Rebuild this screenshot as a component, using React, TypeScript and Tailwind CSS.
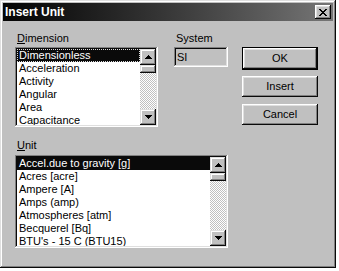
import React from "react";

const FONT = "font-['Liberation_Sans',Arial,sans-serif]";
const RAISED =
  "shadow-[inset_-1px_-1px_#0a0a0a,inset_1px_1px_#fff,inset_-2px_-2px_#808080,inset_2px_2px_#dfdfdf]";
const RAISED_SB =
  "shadow-[inset_-1px_-1px_#0a0a0a,inset_1px_1px_#dfdfdf,inset_-2px_-2px_#808080,inset_2px_2px_#fff]";
const SUNKEN =
  "shadow-[inset_-1px_-1px_#fff,inset_1px_1px_#808080,inset_-2px_-2px_#dfdfdf,inset_2px_2px_#0a0a0a]";

const DIMENSIONS = ["Dimensionless", "Acceleration", "Activity", "Angular", "Area", "Capacitance"];
const UNITS = [
  "Accel.due to gravity [g]",
  "Acres [acre]",
  "Ampere [A]",
  "Amps (amp)",
  "Atmospheres [atm]",
  "Becquerel [Bq]",
  "BTU's - 15 C (BTU15)",
];

function Arrow({ down }: { down?: boolean }) {
  return (
    <svg width="7" height="4" viewBox="0 0 7 4" shapeRendering="crispEdges">
      {down ? <polygon points="0,0 7,0 3.5,4" fill="#000" /> : <polygon points="3.5,0 7,4 0,4" fill="#000" />}
    </svg>
  );
}

function ScrollBar() {
  return (
    <div className="flex flex-col w-[16px] h-full shrink-0">
      <div className={`h-[16px] bg-[#c0c0c0] flex items-center justify-center ${RAISED_SB}`}>
        <Arrow />
      </div>
      <div className={`h-[8px] bg-[#c0c0c0] ${RAISED_SB}`} />
      <div className="flex-1 bg-[repeating-conic-gradient(#c0c0c0_0_25%,#fff_0_50%)] bg-[length:2px_2px]" />
      <div className={`h-[16px] bg-[#c0c0c0] flex items-center justify-center ${RAISED_SB}`}>
        <Arrow down />
      </div>
    </div>
  );
}

function ListBox({ items, className, focus }: { items: string[]; className: string; focus?: boolean }) {
  return (
    <div className={`bg-white p-[2px] flex ${SUNKEN} ${className}`}>
      <div className="flex-1 overflow-hidden">
        {items.map((it, i) => (
          <div
            key={it}
            className={`h-[13px] leading-[13px] pl-[2px] whitespace-nowrap ${
              i === 0 ? "bg-[#0a0a0a] text-white" : "text-black"
            } ${i === 0 && focus ? "outline-1 outline-dotted outline-[#dcdcdc] -outline-offset-1" : ""}`}
          >
            {it}
          </div>
        ))}
      </div>
      <ScrollBar />
    </div>
  );
}

function Button({ label, def, className }: { label: string; def?: boolean; className: string }) {
  if (def) {
    return (
      <div className={`border border-black ${className}`}>
        <div className={`h-full flex items-center justify-center bg-[#c0c0c0] ${RAISED}`}>{label}</div>
      </div>
    );
  }
  return (
    <div className={`flex items-center justify-center bg-[#c0c0c0] ${RAISED} ${className}`}>{label}</div>
  );
}

export default function App() {
  return (
    <div className={`w-[339px] h-[271px] bg-white ${FONT} text-[11px] text-black`}>
      <div
        className={`w-[336px] h-[268px] bg-[#c0c0c0] p-[3px] flex flex-col shadow-[inset_-1px_-1px_#0a0a0a,inset_1px_1px_#dfdfdf,inset_-2px_-2px_#808080,inset_2px_2px_#fff]`}
      >
        {/* title bar */}
        <div className="h-[18px] bg-linear-to-r from-[#050505] to-[#767676] flex items-center justify-between pl-[2px] pr-[2px]">
          <span className="text-white font-bold text-[12px] leading-[18px]">Insert Unit</span>
          <div className={`w-[16px] h-[14px] bg-[#c0c0c0] flex items-center justify-center ${RAISED}`}>
            <svg width="8" height="7" viewBox="0 0 8 7" shapeRendering="crispEdges">
              <path d="M0 0h2v1h1v1h2V1h1V0h2v1H7v1H6v1H5v1h1v1h1v1h1v1H6V6H5V5H3v1H2v1H0V6h1V5h1V4h1V3H2V2H1V1H0z" fill="#000" />
            </svg>
          </div>
        </div>

        {/* body */}
        <div className="pl-[12px] pt-[11px] flex flex-col">
          <div className="flex">
            <div className="flex flex-col w-[143px]">
              <span className="h-[13px] leading-[13px] pl-[2px]">
                <span className="underline">D</span>imension
              </span>
              <ListBox items={DIMENSIONS} className="mt-[2px] h-[80px]" focus />
            </div>
            <div className="flex flex-col ml-[16px] w-[54px]">
              <span className="h-[13px] leading-[13px] pl-[2px]">System</span>
              <div className={`mt-[2px] h-[20px] bg-[#c0c0c0] pl-[3px] leading-[20px] ${SUNKEN}`}>SI</div>
            </div>
            <div className="flex flex-col ml-[14px] w-[76px] pt-[15px]">
              <Button label="OK" def className="h-[23px]" />
              <Button label="Insert" className="h-[21px] mt-[6px]" />
              <Button label="Cancel" className="h-[21px] mt-[7px]" />
            </div>
          </div>

          <span className="mt-[12px] h-[13px] leading-[13px] pl-[2px]">
            <span className="underline">U</span>nit
          </span>
          <ListBox items={UNITS} className="mt-[3px] w-[213px] h-[93px]" />
        </div>
      </div>
    </div>
  );
}
